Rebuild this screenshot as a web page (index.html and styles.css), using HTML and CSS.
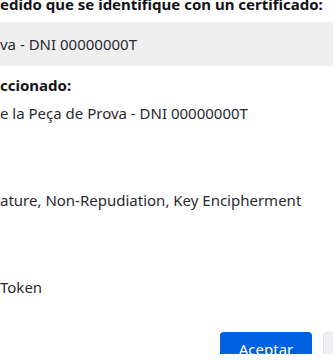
FILE: index.html
```html
<!DOCTYPE html>
<html lang="es">
<head>
    <meta charset="UTF-8">
    <title>Solicitud de identificación</title>
    <link rel="stylesheet" href="styles.css">
</head>
<body>
<div class="dialog">
    <p class="title">edido que se identifique con un certificado:</p>

    <div class="select">va - DNI 00000000T</div>

    <p class="label">ccionado:</p>

    <ul class="details">
        <li>e la Peça de Prova - DNI 00000000T</li>
        <li></li>
        <li></li>
        <li>ature, Non-Repudiation, Key Encipherment</li>
        <li></li>
        <li></li>
        <li>Token</li>
    </ul>

    <div class="buttons">
        <button class="btn btn-primary">Aceptar</button>
        <button class="btn btn-secondary">Cancelar</button>
    </div>
</div>
</body>
</html>
```

FILE: styles.css
```css
html, body {
    margin: 0;
    padding: 0;
    background: #fff;
    overflow: hidden;
}

.dialog {
    font-family: "Noto Sans", "Open Sans", sans-serif;
    font-size: 15px;
    color: #2b2a33;
    width: 333px;
    height: 360px;
}

.title {
    margin: -6px 0 0;
    font-weight: bold;
    line-height: 20px;
    color: #15141a;
    white-space: nowrap;
}

/* Certificate picker */
.select {
    margin-top: 8px;
    height: 44px;
    display: flex;
    align-items: center;
    background: #efefef;
}

.label {
    margin: 9px 0 0;
    font-weight: bold;
    line-height: 20px;
    color: #15141a;
}

.details {
    list-style: none;
    margin: 4px 0 0;
    padding: 0;
}

.details li {
    height: 29px;
    line-height: 29px;
    white-space: nowrap;
}

.buttons {
    margin-top: 30px;
    display: flex;
    gap: 11px;
    padding-left: 220px;
}

.btn {
    font-family: inherit;
    font-size: 15px;
    height: 34px;
    border-radius: 4px;
    padding: 0;
    flex: none;
}

.btn-primary {
    width: 92px;
    background: #0061e0;
    border: none;
    color: #fff;
}

.btn-secondary {
    width: 92px;
    background: #f0f0f4;
    border: 1px solid #e4e4e8;
    color: #15141a;
}
```
